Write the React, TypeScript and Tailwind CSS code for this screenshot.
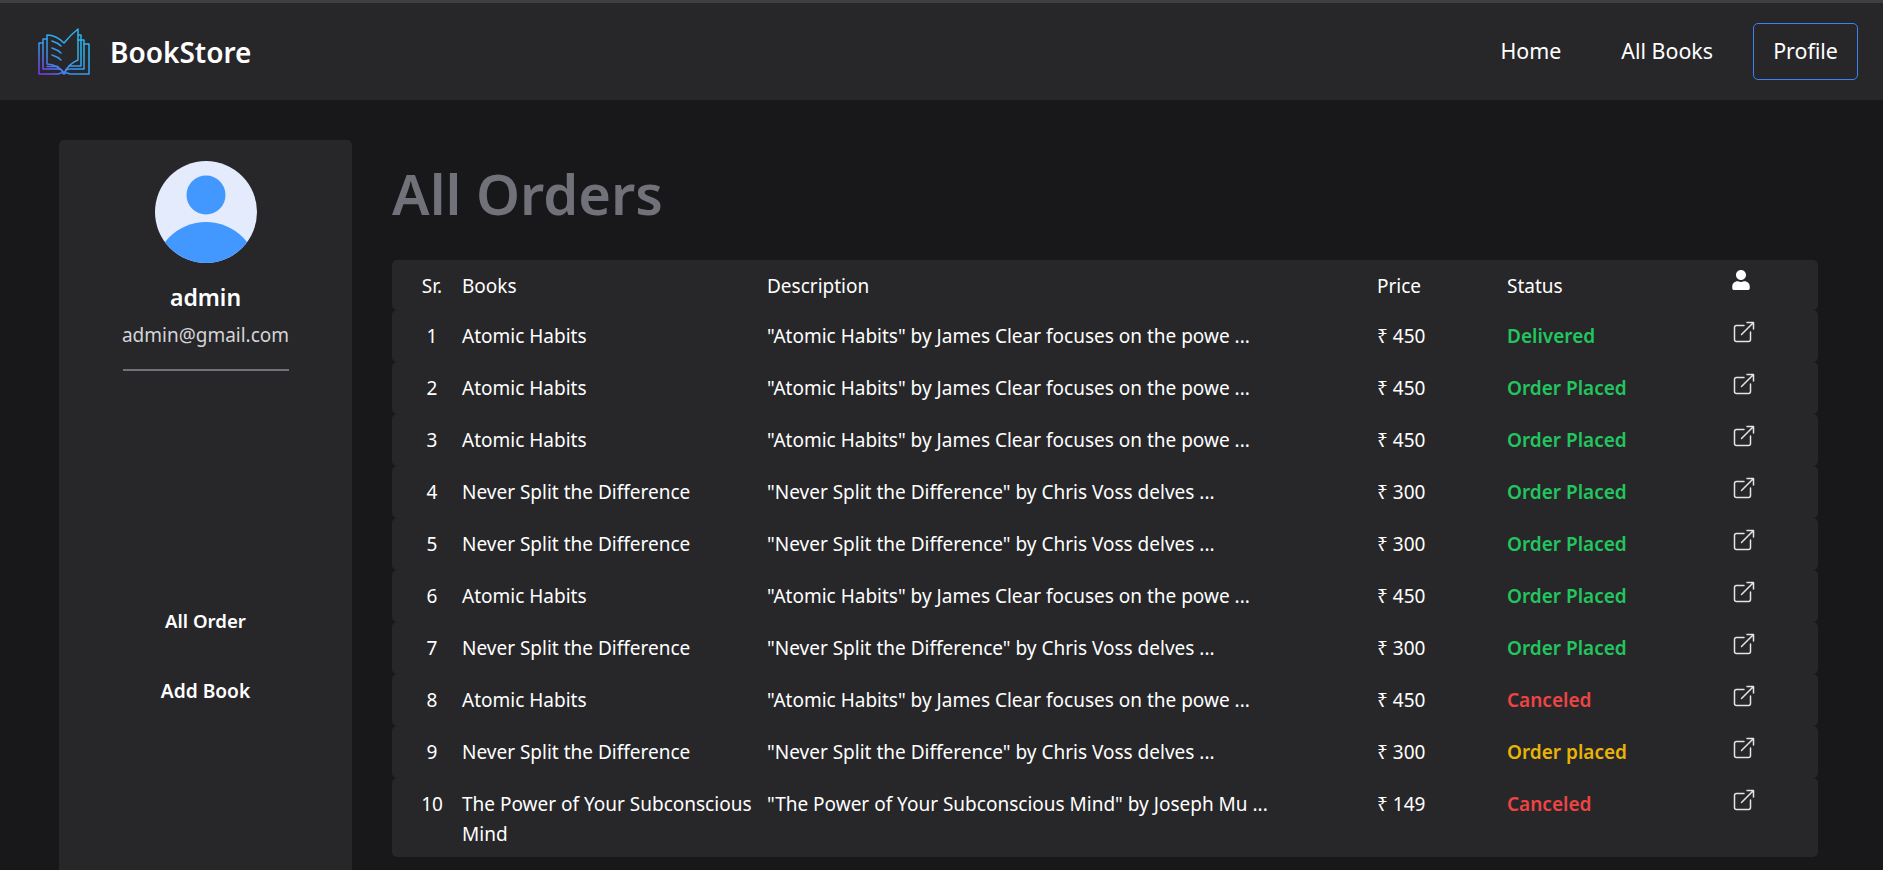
import React from 'react';
import { FaUser } from 'react-icons/fa';

interface Order {
  book: string;
  desc: string;
  price: number;
  status: string;
}

const atomic = '"Atomic Habits" by James Clear focuses on the powe ...';
const never = '"Never Split the Difference" by Chris Voss delves ...';

const orders: Order[] = [
  { book: 'Atomic Habits', desc: atomic, price: 450, status: 'Delivered' },
  { book: 'Atomic Habits', desc: atomic, price: 450, status: 'Order Placed' },
  { book: 'Atomic Habits', desc: atomic, price: 450, status: 'Order Placed' },
  { book: 'Never Split the Difference', desc: never, price: 300, status: 'Order Placed' },
  { book: 'Never Split the Difference', desc: never, price: 300, status: 'Order Placed' },
  { book: 'Atomic Habits', desc: atomic, price: 450, status: 'Order Placed' },
  { book: 'Never Split the Difference', desc: never, price: 300, status: 'Order Placed' },
  { book: 'Atomic Habits', desc: atomic, price: 450, status: 'Canceled' },
  { book: 'Never Split the Difference', desc: never, price: 300, status: 'Order placed' },
  {
    book: 'The Power of Your Subconscious Mind',
    desc: '"The Power of Your Subconscious Mind" by Joseph Mu ...',
    price: 149,
    status: 'Canceled',
  },
];

function statusClass(status: string) {
  if (status === 'Canceled') return 'text-[#ef4444]';
  if (status === 'Order placed') return 'text-[#eab308]';
  return 'text-[#22c55e]';
}

function BookLogo() {
  return (
    <svg width="52" height="48" viewBox="0 0 52 48" fill="none" stroke="url(#logoGrad)" strokeWidth="1.5" strokeLinejoin="round" strokeLinecap="round">
      <defs>
        <linearGradient id="logoGrad" x1="6" y1="47" x2="32" y2="14" gradientUnits="userSpaceOnUse">
          <stop offset="0" stopColor="#7c3aed" />
          <stop offset="0.4" stopColor="#3f8cf0" />
          <stop offset="1" stopColor="#2ab4ec" />
        </linearGradient>
      </defs>
      <path d="M26 46 C 24 40 15 36 9 36 L9 7 C 15 7 21 10 26 15 C 30 10 35 5 40 1 L40 32 C 35 34 28 39 26 46 Z" />
      <path d="M9 11 L5 11 L5 41 L20 41 C 23 41 25 43 26 46 C 27 43 29 41 32 41 L46 41 L46 12 L40 12" />
      <path d="M5 15 L1 15 L1 46 L20 46 L23 45 L29 45 L32 46 L51 46 L51 16 L46 16" />
      <path d="M40 7 L43 7 L43 38 L31 38" />
      <path d="M9 38.5 L20 38.5" />
      <path d="M14 13 C 17 14 20 15 23 18 M14 20 C 17 21 20 22 23 25 M14 27 C 17 28 20 29 23 32" />
    </svg>
  );
}

function Avatar() {
  return (
    <svg width="102" height="102" viewBox="0 0 102 102">
      <defs>
        <clipPath id="avatarClip">
          <circle cx="51" cy="51" r="51" />
        </clipPath>
      </defs>
      <circle cx="51" cy="51" r="51" fill="#e3ebfd" />
      <circle cx="51" cy="34" r="19.5" fill="#4298ff" />
      <circle cx="51" cy="113" r="52" fill="#4298ff" clipPath="url(#avatarClip)" />
    </svg>
  );
}

function OpenIcon() {
  return (
    <svg width="22" height="22" viewBox="0 0 22 22" fill="none" stroke="#e4e4e7" strokeWidth="1.5" strokeLinecap="round" strokeLinejoin="round">
      <path d="M11 4.5 H3.5 A2 2 0 0 0 1.5 6.5 V18.5 A2 2 0 0 0 3.5 20.5 H15.5 A2 2 0 0 0 17.5 18.5 V11" />
      <path d="M8.5 13.5 L20.5 1.5 M14 1.5 H20.5 V8" />
    </svg>
  );
}

export default function App() {
  return (
    <div className="h-screen overflow-hidden bg-[#18181b] text-white font-['Noto_Sans',sans-serif]">
      <div className="h-[3px] bg-[#3f3f3f]" />
      <nav className="flex h-[97px] items-center justify-between bg-[#27272a] pl-[38px] pr-[25px]">
        <div className="flex items-center gap-[20px]">
          <BookLogo />
          <span className="text-[28px] font-semibold">BookStore</span>
        </div>
        <div className="flex items-center text-[21.4px]">
          <a className="mr-[60px]">Home</a>
          <a className="mr-[40px]">All Books</a>
          <a className="flex h-[57px] w-[105px] items-center justify-center rounded-[5px] border border-[#3b82f6]">Profile</a>
        </div>
      </nav>

      <div className="flex gap-[40px] pl-[59px] pr-[65px] pt-[40px]">
        <aside className="flex h-[800px] w-[293px] shrink-0 flex-col items-center rounded-[5px] bg-[#27272a] pt-[21px]">
          <Avatar />
          <p className="mt-[18px] text-[23px] font-semibold leading-[32px]">admin</p>
          <p className="mt-[7px] text-[19px] leading-[30px] text-[#d4d4d8]">admin@gmail.com</p>
          <div className="mt-[19px] h-[2px] w-[166px] bg-[#71717a]" />
          <a className="mt-[236px] text-[18.6px] font-semibold leading-[28px]">All Order</a>
          <a className="mt-[42px] text-[19.2px] font-semibold leading-[28px]">Add Book</a>
        </aside>

        <main className="min-w-0 flex-1">
          <h1 className="mb-[27px] mt-[13px] text-[56px] font-semibold leading-[80px] text-[#71717a]">All Orders</h1>
          <div className="text-[19px] leading-[30px]">
            <div className="grid h-[50px] grid-cols-[70px_305px_610px_130px_224px_1fr] items-center rounded-[5px] bg-[#27272a] pt-[1px]">
              <div className="pl-[20px] pr-[10px] text-center">Sr.</div>
              <div>Books</div>
              <div>Description</div>
              <div>Price</div>
              <div>Status</div>
              <div className="-mt-[11px]"><FaUser size={20} /></div>
            </div>
            {orders.map((o, i) => (
              <div key={i} className="grid min-h-[52px] grid-cols-[70px_305px_610px_130px_224px_1fr] rounded-[5px] bg-[#27272a] pb-[8px] pt-[11px]">
                <div className="pl-[20px] pr-[10px] text-center">{i + 1}</div>
                <div className="pr-[10px]">{o.book}</div>
                <div>{o.desc}</div>
                <div>₹ {o.price}</div>
                <div className={`font-semibold ${statusClass(o.status)}`}>{o.status}</div>
                <div className="pl-[2px]"><OpenIcon /></div>
              </div>
            ))}
          </div>
        </main>
      </div>
    </div>
  );
}
